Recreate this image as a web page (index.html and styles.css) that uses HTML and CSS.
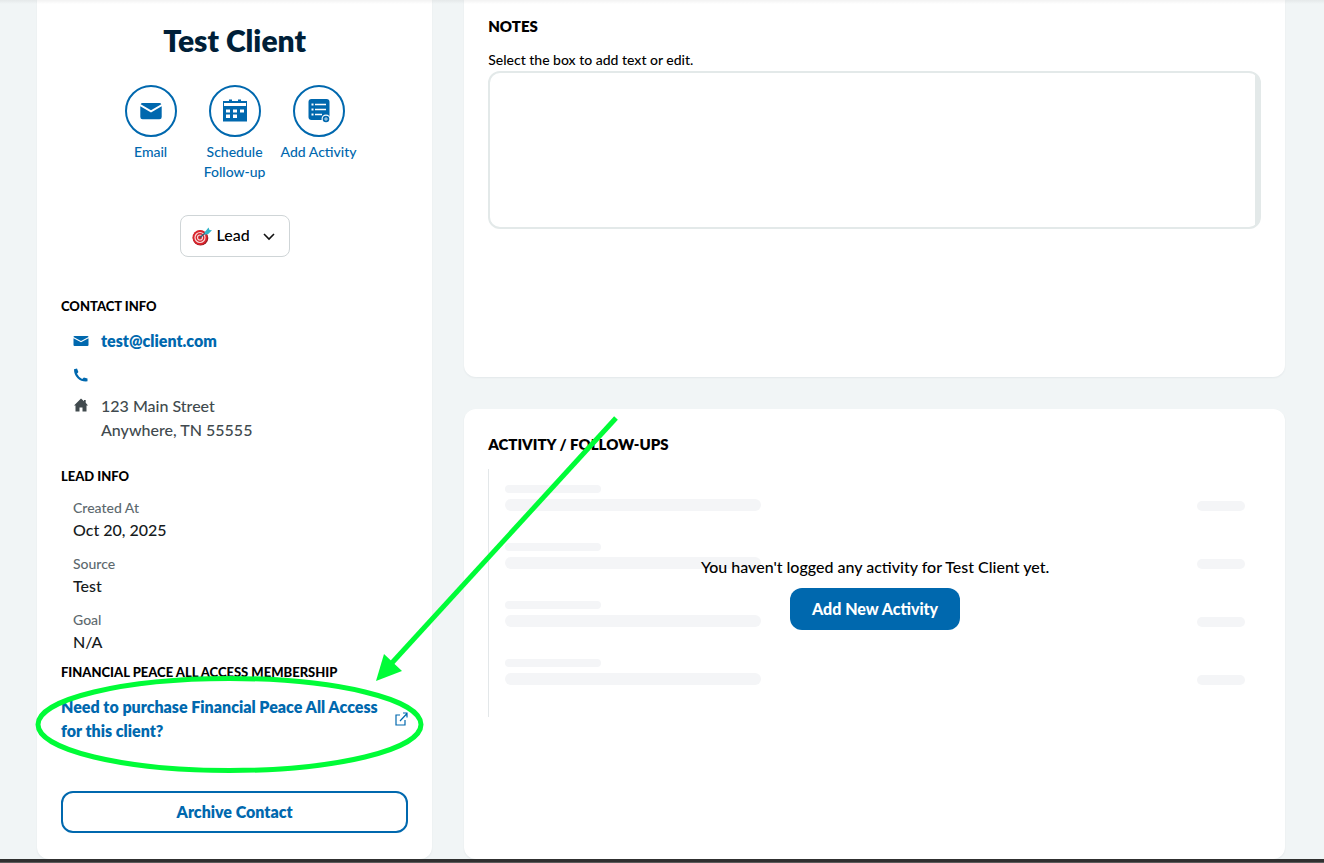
FILE: index.html
```html
<!DOCTYPE html>
<html lang="en">
<head>
<meta charset="utf-8">
<meta name="viewport" content="width=device-width, initial-scale=1">
<title>Test Client</title>
<link rel="stylesheet" href="styles.css">
</head>
<body>
<div class="page">
  <aside class="profile">
    <h1 class="name">Test Client</h1>
    <nav class="actions" aria-label="Contact actions">
      <button class="action" type="button">
        <span class="circle"><svg width="24" height="24" viewBox="0 0 24 24" fill="currentColor"><path d="M3.500 4h17a2 2 0 0 1 1.800 1.300L12 11.300 1.700 5.300A2 2 0 0 1 3.500 4z"/><path d="M1.300 7.300 12 13.500l10.700-6.200V18a2.300 2.300 0 0 1-2.300 2.300H3.600A2.300 2.300 0 0 1 1.300 18z"/></svg></span>
        Email
      </button>
      <button class="action" type="button">
        <span class="circle"><svg width="24" height="24" viewBox="0 0 24 24" fill="currentColor" fill-rule="evenodd"><path d="M6 .5h3V2h6V.5h3V2h6v20.500H0V2h6zM1 4v3h22V4zM3 10.500v3h4v-3zm7 0v3h4v-3zm7 0v3h4v-3zM3 15.500V19h4v-3.500zm7 0V19h4v-3.500z"/></svg></span>
        Schedule Follow-up
      </button>
      <button class="action" type="button">
        <span class="circle"><svg width="24" height="24" viewBox="0 0 24 24"><rect x="1.500" y="0" width="21" height="21" rx="3" fill="currentColor"/><g stroke="#fff" stroke-width="1.500"><path d="M8 5.500h11M8 10.500h11M8 15.500h7"/><path d="M4.500 5.500h2M4.500 10.500h2M4.500 15.500h2" stroke-width="2"/></g><circle cx="19" cy="20" r="4.500" fill="#fff"/><circle cx="19" cy="20" r="3.300" fill="currentColor"/><path d="M17 20h4M19 18v4" stroke="#fff" stroke-width=".7"/></svg></span>
        Add Activity
      </button>
    </nav>
    <div class="status">
      <svg class="target" width="20" height="20" viewBox="0 0 20 20" aria-hidden="true"><ellipse cx="8.500" cy="11" rx="7.800" ry="7.500" fill="#8e1820"/><circle cx="8" cy="10.500" r="7.500" fill="#d9242c"/><circle cx="8" cy="10.500" r="5" fill="none" stroke="#f7dada" stroke-width="1.200"/><circle cx="8" cy="10.500" r="2.500" fill="none" stroke="#f7dada" stroke-width="1.200"/><path d="m8 10.500 7-6" stroke="#28627b" stroke-width="1.400"/><path d="m12.500 5.500 4-5 1 2.500 2.500.3-3.800 3.700-3.200.7z" fill="#32b5ca"/></svg>
      <select class="status-select" aria-label="Contact status"><option>Lead</option></select>
      <svg class="chevron" width="12" height="8" viewBox="0 0 12 8" fill="none" stroke="#111" stroke-width="1.600" aria-hidden="true"><path d="m1 1 5 5 5-5"/></svg>
    </div>

    <section class="contact">
      <h2 class="side-heading">CONTACT INFO</h2>
      <div class="contact-row">
        <svg class="email-icon" width="16" height="16" viewBox="0 0 16 16" fill="currentColor"><path d="M1.500 3h13q1 0 1 1L8 8 .5 4q0-1 1-1z"/><path d="m.5 5.300 7.500 4 7.500-4V12q0 1-1 1h-13q-1 0-1-1z"/></svg>
        <a class="link" href="mailto:test@client.com">test@client.com</a>
      </div>
      <div class="contact-row phone">
        <svg class="email-icon" width="16" height="16" viewBox="0 0 16 16" fill="currentColor"><path d="M1 2.200 4 1.500l1.400 3.500L4 6.700q1.700 3.500 5.200 5.200l1.700-1.500 3.600 1v2.800l-1.700.4Q8 14.500 4.600 11.300 1 7.800 1 2.200z"/></svg>
      </div>
      <div class="contact-row address">
        <svg class="home-icon" width="16" height="16" viewBox="0 0 16 16" fill="currentColor"><path d="m8 .5 3 2.700V2h1.700v2.700L15 7.500h-1.500V13.500h-4v-4h-3v4h-4V7.500H1z"/></svg>
        <address class="lines">123 Main Street<br>Anywhere, TN 55555</address>
      </div>
    </section>

    <section class="lead">
      <h2 class="side-heading">LEAD INFO</h2>
      <dl class="facts">
        <div><dt>Created At</dt><dd>Oct 20, 2025</dd></div>
        <div><dt>Source</dt><dd>Test</dd></div>
        <div><dt>Goal</dt><dd>N/A</dd></div>
      </dl>
    </section>

    <section class="membership">
      <h2 class="side-heading">FINANCIAL PEACE ALL ACCESS MEMBERSHIP</h2>
      <a class="link purchase" href="#purchase">
        <span>Need to purchase Financial Peace All Access for this client?</span>
        <svg class="external" width="14" height="14" viewBox="0 0 14 14" fill="none" stroke="currentColor" stroke-width="1.200"><path d="M6 3H2v10h9V8M6 9l7-7.500M9 1h4v4.500"/></svg>
      </a>
    </section>
    <button class="archive" type="button">Archive Contact</button>
  </aside>

  <main class="content">
    <section class="card notes">
      <h2 class="card-heading">NOTES</h2>
      <label class="notes-label" for="notes">Select the box to add text or edit.</label>
      <textarea class="notes-box" id="notes"></textarea>
    </section>
    <section class="card activity">
      <h2 class="card-heading">ACTIVITY / FOLLOW-UPS</h2>
      <div class="timeline">
        <div class="row"><div><span class="bar short"></span><span class="bar long"></span></div><span class="bar date"></span></div>
        <div class="row"><div><span class="bar short"></span><span class="bar long"></span></div><span class="bar date"></span></div>
        <div class="row"><div><span class="bar short"></span><span class="bar long"></span></div><span class="bar date"></span></div>
        <div class="row"><div><span class="bar short"></span><span class="bar long"></span></div><span class="bar date"></span></div>
        <div class="empty">
          <p class="empty-text">You haven't logged any activity for Test Client yet.</p>
          <button class="add" type="button">Add New Activity</button>
        </div>
      </div>
    </section>
  </main>
</div>
<div class="bottom-edge"></div>
<svg class="annotation" width="640" height="790" viewBox="0 0 640 790" aria-hidden="true"><ellipse cx="229.500" cy="724.500" rx="191.500" ry="46" fill="none" stroke="#00fc37" stroke-width="5"/><path d="M616 418 390 665" stroke="#00fc37" stroke-width="5"/><path d="m376 681 8-27 18 17z" fill="#00fc37"/></svg>
</body>
</html>
```
FILE: styles.css
```css
* { box-sizing: border-box; }

body {
  position: relative;
  display: flex;
  flex-direction: column;
  min-height: 100vh;
  margin: 0;
  background: #f1f5f6;
  color: #000;
  font: 500 16px/24px Lato, "Open Sans", sans-serif;
}

body::before {
  content: "";
  position: absolute;
  top: 0;
  left: 0;
  right: 0;
  height: 4px;
  background: linear-gradient(rgba(0, 0, 0, 0.05), transparent);
}

h1, h2, p, dl, dd { margin: 0; }

button, select, textarea { font: inherit; }

button { cursor: pointer; }

.page {
  flex: 1;
  display: grid;
  grid-template-columns: 13fr 27fr;
  gap: 32px;
  padding: 0 39px 0 37px;
}

.profile {
  display: flex;
  flex-direction: column;
  padding: 22px 24px 26px;
  background: #fff;
  border-radius: 0 0 12px 12px;
  box-shadow: 0 1px 2px rgba(0, 30, 50, 0.06);
}

.name {
  color: #001f38;
  font-size: 30px;
  font-weight: 800;
  line-height: 36px;
  text-align: center;
}

.actions {
  display: flex;
  justify-content: center;
  margin-top: 27px;
}

.action {
  display: flex;
  flex-direction: column;
  align-items: center;
  gap: 5px;
  width: 84px;
  padding: 0;
  border: 0;
  background: none;
  color: #0068ae;
  font-size: 14px;
  line-height: 20px;
}

.circle {
  display: grid;
  place-items: center;
  width: 52px;
  height: 52px;
  border: 2px solid #0068ae;
  border-radius: 50%;
}

.status {
  position: relative;
  align-self: center;
  margin-top: 33px;
}

.status-select {
  display: block;
  width: 110px;
  height: 42px;
  padding: 0 36px 2px;
  border: 1px solid #cfd5d7;
  border-radius: 8px;
  background: #fff;
  color: #000;
  appearance: none;
}

.target {
  position: absolute;
  top: 12px;
  left: 12px;
}

.chevron {
  position: absolute;
  top: 18px;
  right: 15px;
}

.side-heading {
  font-size: 13px;
  font-weight: 900;
  line-height: 20px;
}

.contact { margin-top: 39px; }

.contact-row {
  display: flex;
  gap: 12px;
  min-height: 24px;
  margin-top: 13px;
  padding-left: 12px;
}

.contact-row svg { margin-top: 4px; }

.phone { margin-top: 10px; }

.address { margin-top: 7px; }

.email-icon { color: #0068ae; }

.home-icon { color: #414a4e; }

.lines {
  color: #414a4e;
  font-style: normal;
}

.link {
  color: #0068ae;
  font-weight: 800;
  text-decoration: none;
}

.lead { margin-top: 24px; }

.facts {
  display: grid;
  gap: 12px;
  margin-top: 12px;
  padding-left: 12px;
}

.facts dt {
  color: #5d696e;
  font-size: 14px;
  line-height: 20px;
}

.facts dd { color: #161b1d; }

.membership { margin-top: 8px; }

.purchase {
  display: flex;
  align-items: center;
  justify-content: space-between;
  gap: 12px;
  margin-top: 13px;
}

.external { flex: none; }

.archive {
  height: 42px;
  margin-top: 48px;
  border: 2px solid #0068ae;
  border-radius: 12px;
  background: #fff;
  color: #0068ae;
  font-weight: 800;
}

.content {
  display: flex;
  flex-direction: column;
  gap: 32px;
}

.card {
  padding: 23px 24px;
  background: #fff;
  border-radius: 12px;
  box-shadow: 0 1px 2px rgba(0, 30, 50, 0.06);
}

.card-heading {
  font-size: 15px;
  font-weight: 800;
  line-height: 24px;
}

.notes {
  padding-top: 14px;
  padding-bottom: 148px;
  border-radius: 0 0 12px 12px;
}

.notes-label {
  display: block;
  margin-top: 12px;
  font-size: 14px;
  line-height: 20px;
}

.notes-box {
  display: block;
  width: 100%;
  height: 158px;
  margin-top: 1px;
  padding: 12px;
  border: 2px solid #e3e9e9;
  border-radius: 12px;
  background: linear-gradient(#e3e9e9, #e3e9e9) right / 4px 100% no-repeat #fff;
  resize: none;
}

.activity { flex: 1; }

.timeline {
  position: relative;
  display: grid;
  gap: 32px;
  margin-top: 13px;
  padding: 16px 16px 32px;
  border-left: 1px solid #e3e7e9;
}

.row {
  display: flex;
  align-items: flex-end;
  justify-content: space-between;
}

.bar {
  display: block;
  border-radius: 6px;
  background: #f4f5f7;
}

.short {
  width: 96px;
  height: 8px;
}

.long {
  width: 256px;
  height: 12px;
  margin-top: 6px;
}

.date {
  width: 48px;
  height: 10px;
}

.empty {
  position: absolute;
  inset: 0;
  display: flex;
  flex-direction: column;
  align-items: center;
  justify-content: center;
  gap: 9px;
  padding-bottom: 2px;
}

.add {
  height: 42px;
  padding: 0 22px;
  border: 0;
  border-radius: 12px;
  background: #0068ae;
  color: #fff;
  font-weight: 900;
}

.bottom-edge {
  height: 4px;
  border-bottom: 1px solid #5c5c5c;
  background: #303030;
}

.annotation {
  position: absolute;
  top: 0;
  left: 0;
  pointer-events: none;
}
```
